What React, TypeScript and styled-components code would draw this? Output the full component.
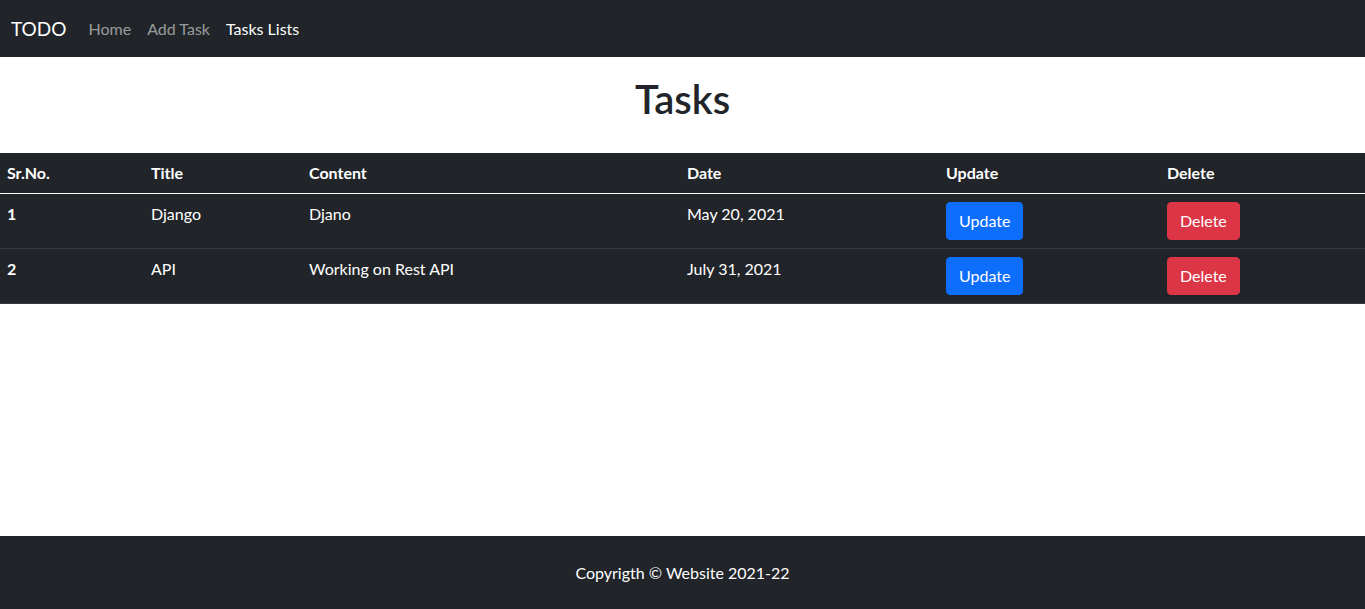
import React from "react";
import styled, { createGlobalStyle } from "styled-components";

const Global = createGlobalStyle`
  html, body { margin: 0; padding: 0; }
  body {
    font-family: "Lato", "Liberation Sans", sans-serif;
    font-size: 16px;
    line-height: 1.5;
    color: #212529;
    background: #fff;
  }
  * { box-sizing: border-box; }
`;

const Page = styled.div`
  min-height: 609px;
  display: flex;
  flex-direction: column;
`;

const NavBar = styled.nav`
  height: 57px;
  background: #212529;
  display: flex;
  align-items: center;
  padding: 0 12px 0 11px;
`;

const Brand = styled.a`
  color: #fff;
  font-size: 19px;
  line-height: 30px;
  margin-right: 14px;
  text-decoration: none;
`;

const NavLinks = styled.div`
  display: flex;
`;

const NavLink = styled.a<{ $active?: boolean }>`
  color: ${(p) => (p.$active ? "#fff" : "rgba(255,255,255,0.55)")};
  padding: 8px 8px;
  text-decoration: none;
  font-size: 16px;
`;

const Main = styled.main`
  flex: 1;
`;

const Heading = styled.h1`
  margin: 0;
  padding: 18px 0 30px;
  text-align: center;
  font-size: 40px;
  font-weight: 600;
  line-height: 48px;
  color: #212529;
`;

const Table = styled.table`
  width: 100%;
  border-collapse: collapse;
  background: #212529;
  color: #fff;
  table-layout: fixed;
`;

const HeadCell = styled.th`
  text-align: left;
  font-weight: 700;
  padding: 8px 7px;
  line-height: 24px;
  border-bottom: 1px solid #fff;
  vertical-align: top;
`;

const BodyRow = styled.tr`
  border-bottom: 1px solid #373b3e;
`;

const Cell = styled.td<{ $bold?: boolean }>`
  padding: 8px 7px;
  line-height: 24px;
  vertical-align: top;
  font-weight: ${(p) => (p.$bold ? 700 : 400)};
`;

const Button = styled.button<{ $variant: "primary" | "danger" }>`
  font-family: inherit;
  font-size: 16px;
  line-height: 24px;
  padding: 6px 12px;
  border-radius: 4px;
  border: 1px solid ${(p) => (p.$variant === "primary" ? "#0d6efd" : "#dc3545")};
  background: ${(p) => (p.$variant === "primary" ? "#0d6efd" : "#dc3545")};
  color: #fff;
  cursor: pointer;
`;

const Footer = styled.footer`
  background: #212529;
  color: #fff;
  text-align: center;
  height: 73px;
  display: flex;
  align-items: center;
  justify-content: center;
`;

const tasks = [
  { id: 1, title: "Django", content: "Djano", date: "May 20, 2021" },
  { id: 2, title: "API", content: "Working on Rest API", date: "July 31, 2021" },
];

export default function App() {
  return (
    <Page>
      <Global />
      <NavBar>
        <Brand href="#">TODO</Brand>
        <NavLinks>
          <NavLink href="#">Home</NavLink>
          <NavLink href="#">Add Task</NavLink>
          <NavLink href="#" $active>
            Tasks Lists
          </NavLink>
        </NavLinks>
      </NavBar>
      <Main>
        <Heading>Tasks</Heading>
        <Table>
          <colgroup>
            <col style={{ width: 144 }} />
            <col style={{ width: 158 }} />
            <col style={{ width: 378 }} />
            <col style={{ width: 259 }} />
            <col style={{ width: 221 }} />
            <col />
          </colgroup>
          <thead>
            <tr>
              <HeadCell>Sr.No.</HeadCell>
              <HeadCell>Title</HeadCell>
              <HeadCell>Content</HeadCell>
              <HeadCell>Date</HeadCell>
              <HeadCell>Update</HeadCell>
              <HeadCell>Delete</HeadCell>
            </tr>
          </thead>
          <tbody>
            {tasks.map((t) => (
              <BodyRow key={t.id}>
                <Cell $bold>{t.id}</Cell>
                <Cell>{t.title}</Cell>
                <Cell>{t.content}</Cell>
                <Cell>{t.date}</Cell>
                <Cell>
                  <Button $variant="primary">Update</Button>
                </Cell>
                <Cell>
                  <Button $variant="danger">Delete</Button>
                </Cell>
              </BodyRow>
            ))}
          </tbody>
        </Table>
      </Main>
      <Footer>Copyrigth © Website 2021-22</Footer>
    </Page>
  );
}
